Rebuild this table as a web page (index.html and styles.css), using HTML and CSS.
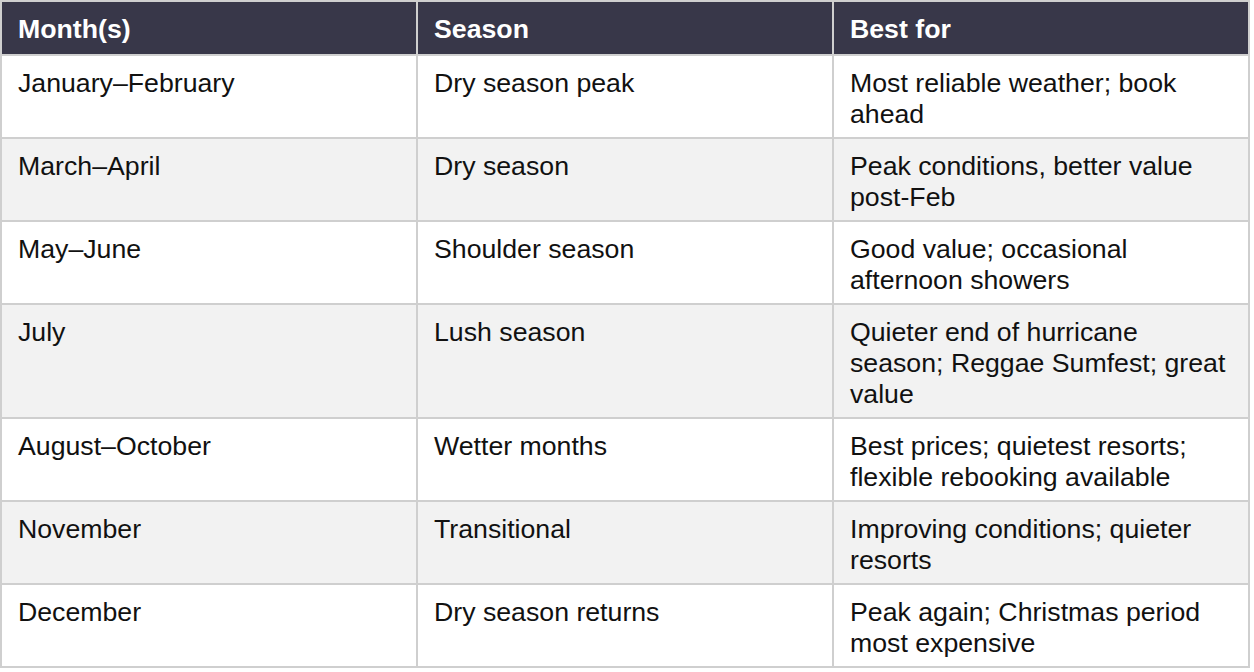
FILE: index.html
```html
<!DOCTYPE html>
<html lang="en">
<head>
<meta charset="utf-8">
<title>Jamaica seasons</title>
<link rel="stylesheet" href="styles.css">
</head>
<body>
<table class="seasons">
  <thead>
    <tr><th>Month(s)</th><th>Season</th><th>Best for</th></tr>
  </thead>
  <tbody>
    <tr><td>January–February</td><td>Dry season peak</td><td>Most reliable weather; book ahead</td></tr>
    <tr><td>March–April</td><td>Dry season</td><td>Peak conditions, better value post-Feb</td></tr>
    <tr><td>May–June</td><td>Shoulder season</td><td>Good value; occasional afternoon showers</td></tr>
    <tr><td>July</td><td>Lush season</td><td>Quieter end of hurricane season; Reggae Sumfest; great value</td></tr>
    <tr><td>August–October</td><td>Wetter months</td><td>Best prices; quietest resorts; flexible rebooking available</td></tr>
    <tr><td>November</td><td>Transitional</td><td>Improving conditions; quieter resorts</td></tr>
    <tr><td>December</td><td>Dry season returns</td><td>Peak again; Christmas period most expensive</td></tr>
  </tbody>
</table>
</body>
</html>
```
FILE: styles.css
```css
html, body {
  margin: 0;
  padding: 0;
  background: #ffffff;
}
.seasons {
  width: 1250px;
  border-collapse: collapse;
  table-layout: fixed;
  font-family: "Liberation Sans", Arial, sans-serif;
  font-size: 26.7px;
  line-height: 31px;
  color: #111111;
}
.seasons th,
.seasons td {
  border: 2px solid #cfcfcf;
  padding: 12px 16px 7px;
  text-align: left;
  vertical-align: top;
}
.seasons th {
  padding: 12px 16px 9px;
  background: #383749;
  color: #ffffff;
  font-weight: bold;
}
.seasons tbody tr:nth-child(even) td {
  background: #f2f2f2;
}
```
